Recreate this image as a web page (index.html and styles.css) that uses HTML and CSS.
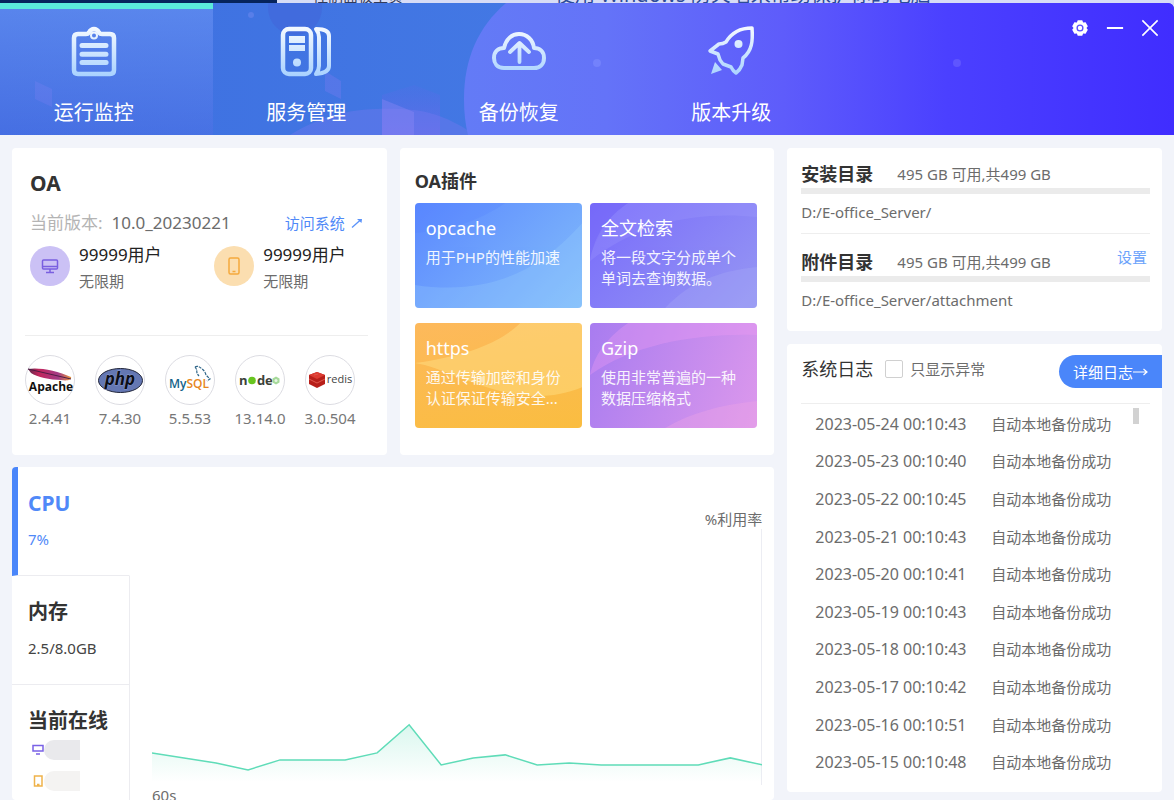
FILE: index.html
```html
<!DOCTYPE html>
<html lang="zh-CN">
<head>
<meta charset="utf-8">
<meta name="viewport" content="width=device-width, initial-scale=1">
<title>OA 运行监控</title>
<link rel="stylesheet" href="styles.css">
</head>
<body>
<div class="desktop">
  <span class="desktop-dark"></span>
  <span class="desktop-side">控制面板主页</span>
  <span class="desktop-title">使用 Windows 防火墙来帮助保护你的电脑</span>
</div>
<div class="app">
  <header class="header">
    <svg class="header-art" viewBox="0 0 1174 132" preserveAspectRatio="none" aria-hidden="true">
      <defs>
        <linearGradient id="sweep" gradientUnits="userSpaceOnUse" x1="464" y1="0" x2="1174" y2="0">
          <stop offset="0" stop-color="#637bf6"/><stop offset=".2" stop-color="#6473f8"/><stop offset=".45" stop-color="#5e5cfb"/><stop offset=".68" stop-color="#4b40ff"/><stop offset="1" stop-color="#402dff"/>
        </linearGradient>
        <linearGradient id="cube" x1="0" y1="0" x2="0" y2="1">
          <stop offset="0" stop-color="#6c62ec" stop-opacity=".1"/><stop offset="1" stop-color="#7568f0" stop-opacity=".5"/>
        </linearGradient>
      </defs>
      <circle cx="295" cy="5" r="27" fill="#4264d8" opacity=".55"/>
      <path d="M382 92L414 82L440 92V132H382Z" fill="url(#cube)"/>
      <path d="M290 132C330 108 360 105 400 106C430 107 450 115 475 132Z" fill="#7a78f0" opacity=".35"/>
      <path d="M382 96L414 109V132H382Z" fill="#8b86f4" opacity=".4"/>
      <path d="M35 78L52 86V104L35 96ZM325 68L341 78V96L325 88Z" fill="#7a7cf0" opacity=".35"/>
      <path d="M506 0C478 24 464 56 464 96Q464 116 468 132H1174V0Z" fill="url(#sweep)"/>
      <circle cx="597" cy="60" r="4" fill="#8190ff" opacity=".5"/>
      <circle cx="957" cy="60" r="4" fill="#736cff" opacity=".5"/>
      <circle cx="251" cy="12" r="3" fill="#7089f0" opacity=".5"/>
    </svg>
    <nav class="tabs">
      <button class="tab tab-active" type="button">
        <svg class="tab-icon" viewBox="0 0 56 56" fill="none" stroke="url(#ice)" aria-hidden="true">
          <defs><linearGradient id="ice" gradientUnits="userSpaceOnUse" x1="0" y1="4" x2="0" y2="52"><stop offset="0" stop-color="#f4f9ff"/><stop offset="1" stop-color="#a9d2ff"/></linearGradient></defs>
          <path d="M12 10H20Q22 10 23 8.500Q25 5 28 5T33 8.500Q34 10 36 10H44Q48 10 48 14V46Q48 50 44 50H12Q8 50 8 46V14Q8 10 12 10Z" stroke-width="4.500"/>
          <circle cx="28" cy="11.500" r="3" stroke-width="2"/>
          <path d="M16 21.500H40M16 30.200H40M16 38.500H40.100" stroke-width="5" stroke-linecap="round"/>
        </svg>
        <span>运行监控</span>
      </button>
      <button class="tab" type="button">
        <svg class="tab-icon" viewBox="0 0 56 56" fill="none" stroke="url(#ice)" aria-hidden="true">
          <rect x="5" y="5" width="28" height="45" rx="6" stroke-width="4.500"/>
          <path d="M11 12H27V19H11ZM11 21H27V27H11Z" fill="url(#ice)" stroke="none"/>
          <circle cx="19" cy="38.500" r="4" fill="url(#ice)" stroke="none"/>
          <path d="M38 5Q51 5 51 12V42Q51 49 38 50Q41 46 41 42V13Q41 9 38 5Z" stroke-width="4" stroke-linejoin="round"/>
        </svg>
        <span>服务管理</span>
      </button>
      <button class="tab" type="button">
        <svg class="tab-icon" viewBox="0 0 56 56" fill="none" stroke="url(#ice)" stroke-linecap="round" stroke-linejoin="round" aria-hidden="true">
          <path d="M13 44C6 44 3 39 3 34C3 28 7 24 13 24C15 15 21 10 28 10C36 10 42 16 43 24C49 24 53 28 53 34C53 40 49 44 43 44Z" stroke-width="4"/>
          <path d="M28.500 38V20M19 28L28.500 19L38 28" stroke-width="3.800"/>
        </svg>
        <span>备份恢复</span>
      </button>
      <button class="tab" type="button">
        <svg class="tab-icon" viewBox="0 0 56 56" fill="none" stroke="url(#ice)" stroke-linejoin="round" aria-hidden="true">
          <path d="M49 4C38 4 29 8 23 18Q20 20 16 20L7 27L15 30L17 36L20 40L28 43Q30 47 33 49Q37 46 39 41L40 34C49 27 50 17 49 4Z" stroke-width="3.500"/>
          <circle cx="35.500" cy="20" r="4" fill="url(#ice)" stroke="none"/>
          <path d="M12 38L19 46L8 50Z" fill="url(#ice)" stroke="none"/>
        </svg>
        <span>版本升级</span>
      </button>
    </nav>
    <div class="window-controls">
      <button type="button" aria-label="设置"><svg viewBox="0 0 20 20" aria-hidden="true"><path fill="#fff" d="M7.500 1.500H12.500L13.500 4L16.200 3.700L18.700 8L17.200 10L18.700 12L16.200 16.300L13.500 16L12.500 18.500H7.500L6.500 16L3.800 16.300L1.300 12L2.800 10L1.300 8L3.800 3.700L6.500 4Z"/><circle cx="10" cy="10" r="3.200" fill="none" stroke="#5a4dff" stroke-width="1.500"/></svg></button>
      <button type="button" aria-label="最小化"><svg viewBox="0 0 20 20" aria-hidden="true"><path d="M1 10H19" stroke="#fff" stroke-width="2.200"/></svg></button>
      <button type="button" aria-label="关闭"><svg viewBox="0 0 20 20" aria-hidden="true"><path d="M1.500 1.500L18.500 18.500M18.500 1.500L1.500 18.500" stroke="#fff" stroke-width="1.800"/></svg></button>
    </div>
  </header>

  <main class="main">
    <section class="card oa">
      <h2 class="title-lg">OA</h2>
      <div class="version">
        <span class="version-label">当前版本:</span><span>10.0_20230221</span>
        <a class="visit" href="#">访问系统 <svg viewBox="0 0 12 12" aria-hidden="true"><path d="M1 10.500L10 2.500" fill="none" stroke="#5b93fa" stroke-width="1.300"/><path d="M6 2H11L10.500 6Z" fill="#5b93fa"/></svg></a>
      </div>
      <div class="users">
        <div class="user">
          <span class="user-icon user-desktop"><svg viewBox="0 0 18 18" fill="none" stroke="#7a5fe0" stroke-width="1.500" aria-hidden="true"><rect x="1.500" y="3" width="15" height="9" rx="1"/><path d="M1.500 9.500H16.500M9 12V15.500M5 15.500H13"/></svg></span>
          <div><div class="user-count">99999用户</div><div class="user-term">无限期</div></div>
        </div>
        <div class="user">
          <span class="user-icon user-mobile"><svg viewBox="0 0 18 18" fill="none" stroke="#f5a93c" stroke-width="1.500" aria-hidden="true"><rect x="4" y="1" width="10" height="16" rx="1.500"/><path d="M7.500 14.500H10.500"/></svg></span>
          <div><div class="user-count">99999用户</div><div class="user-term">无限期</div></div>
        </div>
      </div>
      <ul class="stack">
        <li>
          <svg class="logo" viewBox="0 0 50 50" role="img" aria-label="Apache"><defs><linearGradient id="feather"><stop offset="0" stop-color="#5c2a4b"/><stop offset=".25" stop-color="#c2265c"/><stop offset=".7" stop-color="#a33a86"/><stop offset="1" stop-color="#e8973a"/></linearGradient></defs><circle cx="25" cy="25" r="24.500" class="logo-ring"/><path d="M3 14C12 12 32 15 46 22C47 25 42 26 36 25C25 25 12 22 6 18Z" fill="url(#feather)"/><path d="M3 14L46 24" stroke="#4e1d45" fill="none"/><text x="26" y="36" class="logo-text apache">Apache</text></svg>
          <span>2.4.41</span>
        </li>
        <li>
          <svg class="logo" viewBox="0 0 50 50" role="img" aria-label="php"><circle cx="25" cy="25" r="24.500" class="logo-ring"/><ellipse cx="25.500" cy="25.500" rx="22" ry="12" fill="#6477b3" stroke="#20253a" stroke-width="1"/><text x="25" y="30" class="logo-text php">php</text></svg>
          <span>7.4.30</span>
        </li>
        <li>
          <svg class="logo" viewBox="0 0 50 50" role="img" aria-label="MySQL"><circle cx="25" cy="25" r="24.500" class="logo-ring"/><path d="M30 12Q33 10 37 14Q40 16 41 20L45 24L42 26M30 12L32 15Q31 18 34 21" fill="none" stroke="#2d6487" stroke-width="1.200" stroke-dasharray="3 1"/><text x="24" y="33" class="logo-text mysql"><tspan fill="#14638a">My</tspan><tspan fill="#e68622">SQL</tspan></text></svg>
          <span>5.5.53</span>
        </li>
        <li>
          <svg class="logo" viewBox="0 0 50 50" role="img" aria-label="node"><circle cx="25" cy="25" r="24.500" class="logo-ring"/><text x="4" y="30" class="logo-text node">n</text><circle cx="17" cy="25.500" r="3.800" fill="#68c51f"/><text x="22" y="30" class="logo-text node">d</text><text x="30" y="30" class="logo-text node">e</text><path d="M41 21.500L44.500 23.500V27.500L41 29.500L37.500 27.500V23.500Z" fill="#a6d99a"/><circle cx="41" cy="25.500" r="1.500" fill="#e8f6e4"/></svg>
          <span>13.14.0</span>
        </li>
        <li>
          <svg class="logo" viewBox="0 0 50 50" role="img" aria-label="redis"><circle cx="25" cy="25" r="24.500" class="logo-ring"/><path d="M4 20L12 17L20 20V29L12 33L4 29Z" fill="#b71f1a"/><path d="M4 20L12 17L20 20L12 24Z" fill="#dd3b31"/><path d="M4 24L12 28L20 24M9 20L13 19" stroke="#e0574d" fill="none"/><text x="34.500" y="28" class="logo-text redis">redis</text></svg>
          <span>3.0.504</span>
        </li>
      </ul>
    </section>

    <section class="card plugins">
      <h2 class="title">OA插件</h2>
      <div class="tiles">
        <article class="tile tile-blue"><svg viewBox="0 0 167 105" preserveAspectRatio="none" aria-hidden="true"><path d="M0 82C80 94 130 62 167 20V105H0Z" fill="#a5dcff" opacity=".22"/><path d="M0 30C50 26 75 10 90 0H0Z" fill="#4f7bff" opacity=".2"/></svg><h3>opcache</h3><p>用于PHP的性能加速</p></article>
        <article class="tile tile-violet"><svg viewBox="0 0 167 105" preserveAspectRatio="none" aria-hidden="true"><path d="M0 54C12 20 25 8 38 0H0Z" fill="#6d60f4" opacity=".2"/><path d="M0 58C50 18 110 8 167 14V0H38C15 16 4 34 0 58Z" fill="#a9a4ff" opacity=".22"/><path d="M75 105C100 78 130 68 167 64V105Z" fill="#b0b2f8" opacity=".25"/></svg><h3>全文检索</h3><p>将一段文字分成单个单词去查询数据。</p></article>
        <article class="tile tile-amber"><svg viewBox="0 0 167 105" preserveAspectRatio="none" aria-hidden="true"><path d="M0 40C50 33 85 20 105 0H167V64C100 92 40 46 0 40Z" fill="#ffe58c" opacity=".42"/></svg><h3>https</h3><p>通过传输加密和身份认证保证传输安全...</p></article>
        <article class="tile tile-pink"><svg viewBox="0 0 167 105" preserveAspectRatio="none" aria-hidden="true"><path d="M0 52C45 20 110 10 167 12V0H38C15 16 4 34 0 52Z" fill="#ee9cf4" opacity=".35"/><path d="M75 105C100 90 130 82 167 78V105Z" fill="#f0a6e4" opacity=".35"/></svg><h3>Gzip</h3><p>使用非常普遍的一种数据压缩格式</p></article>
      </div>
    </section>

    <section class="card monitor">
      <nav class="metrics">
        <button class="metric metric-active" type="button"><strong>CPU</strong><span>7%</span></button>
        <button class="metric" type="button"><strong>内存</strong><span>2.5/8.0GB</span></button>
        <button class="metric" type="button"><strong>当前在线</strong>
          <span class="online"><svg viewBox="0 0 12 12" fill="none" stroke="#7a62e6" stroke-width="1.500" aria-hidden="true"><path d="M1 1.500H11V7H1ZM4 10H8"/></svg><i class="mask"></i></span>
          <span class="online"><svg viewBox="0 0 12 12" fill="none" stroke="#efb24a" stroke-width="1.500" aria-hidden="true"><path d="M2.500 1H10V11H2.500ZM5 9.500H7.500"/></svg><i class="mask mask-light"></i></span>
        </button>
      </nav>
      <div class="chart">
        <div class="chart-unit">%利用率</div>
        <svg class="chart-plot" viewBox="0 0 610 255" preserveAspectRatio="none" role="img" aria-label="CPU 利用率">
          <defs><linearGradient id="area" gradientUnits="userSpaceOnUse" x1="0" y1="190" x2="0" y2="252"><stop offset="0" stop-color="#5fdcb8" stop-opacity=".25"/><stop offset="1" stop-color="#5fdcb8" stop-opacity="0"/></linearGradient></defs>
          <path d="M0 223L32 228L64 233L96 240L128 230H193L225 223L257 195L289 235L321 228L353 225L385 235L417 233L449 235H546L578 228L610 235V255H0Z" fill="url(#area)"/>
          <path d="M609.500 0V255" stroke="#e3e5ee"/>
          <path d="M0 223L32 228L64 233L96 240L128 230H193L225 223L257 195L289 235L321 228L353 225L385 235L417 233L449 235H546L578 228L610 235" fill="none" stroke="#5fdcb8" stroke-width="1.500"/>
        </svg>
        <div class="chart-start">60s</div>
      </div>
    </section>

    <aside class="side">
      <section class="card dirs">
        <div class="dir">
          <div class="dir-head"><h2 class="title">安装目录</h2><span>495 GB 可用,共499 GB</span></div>
          <div class="bar"></div>
          <div class="path">D:/E-office_Server/</div>
        </div>
        <div class="dir">
          <div class="dir-head"><h2 class="title">附件目录</h2><span>495 GB 可用,共499 GB</span><a class="dir-set" href="#">设置</a></div>
          <div class="bar"></div>
          <div class="path">D:/E-office_Server/attachment</div>
        </div>
      </section>
      <section class="card logs">
        <div class="logs-head">
          <h2 class="logs-title">系统日志</h2>
          <label class="only"><input type="checkbox">只显示异常</label>
          <button class="detail" type="button">详细日志<svg viewBox="0 0 15 10" aria-hidden="true"><path d="M0 5H14M10.500 2L14 5L10.500 8" fill="none" stroke="#fff" stroke-width="1.200"/></svg></button>
        </div>
        <div class="logs-body">
          <table class="log-table">
            <tbody>
              <tr><td>2023-05-24 00:10:43</td><td>自动本地备份成功</td></tr>
              <tr><td>2023-05-23 00:10:40</td><td>自动本地备份成功</td></tr>
              <tr><td>2023-05-22 00:10:45</td><td>自动本地备份成功</td></tr>
              <tr><td>2023-05-21 00:10:43</td><td>自动本地备份成功</td></tr>
              <tr><td>2023-05-20 00:10:41</td><td>自动本地备份成功</td></tr>
              <tr><td>2023-05-19 00:10:43</td><td>自动本地备份成功</td></tr>
              <tr><td>2023-05-18 00:10:43</td><td>自动本地备份成功</td></tr>
              <tr><td>2023-05-17 00:10:42</td><td>自动本地备份成功</td></tr>
              <tr><td>2023-05-16 00:10:51</td><td>自动本地备份成功</td></tr>
              <tr><td>2023-05-15 00:10:48</td><td>自动本地备份成功</td></tr>
            </tbody>
          </table>
          <span class="thumb"></span>
        </div>
      </section>
    </aside>
  </main>
</div>
</body>
</html>
```

FILE: styles.css
```css
* { box-sizing: border-box; }

body {
  margin: 0;
  height: 100vh;
  display: flex;
  flex-direction: column;
  overflow: hidden;
  background: #d7dcf6;
  color: #6c6c6c;
  font: 15px/24px "Noto Sans", "Noto Sans CJK SC", sans-serif;
}

h2, h3, p, ul { margin: 0; padding: 0; }
button { border: 0; padding: 0; background: none; color: inherit; font: inherit; cursor: pointer; }
a { color: #5089f8; text-decoration: none; }

/* Strip of the window behind */
.desktop {
  flex: none;
  height: 3px;
  display: flex;
  align-items: flex-end;
  overflow: hidden;
  color: #2d4b96;
  white-space: nowrap;
}
.desktop-dark { width: 277px; height: 3px; background: #06245c; }
.desktop-side { margin-left: 36px; line-height: 14px; color: #333c5a; }
.desktop-title { margin-left: 152px; font-size: 20px; line-height: 16px; }

.app {
  flex: 1;
  min-height: 0;
  display: flex;
  flex-direction: column;
  background: #f2f4fa;
  border-radius: 0 6px 0 0;
  overflow: hidden;
}

/* Header */
.header {
  flex: none;
  position: relative;
  display: flex;
  justify-content: space-between;
  height: 132px;
  background: linear-gradient(90deg, #3d6fe0, #4378e4 45%, #402dff);
}
.header-art { position: absolute; inset: 0; width: 100%; height: 100%; }
.tabs { position: relative; display: grid; grid-template-columns: repeat(4, 1fr); width: 73%; max-width: 850px; }
.tab {
  display: flex;
  flex-direction: column;
  align-items: center;
  gap: 18px;
  padding: 21px 25px 0 0;
  color: #fff;
  font-size: 20px;
  line-height: 30px;
  white-space: nowrap;
}
.tab-active {
  padding-top: 15px;
  border-top: 6px solid #5beadb;
  background: linear-gradient(180deg, rgba(116, 154, 248, .5), rgba(90, 110, 232, .3));
}
.tab-icon { width: 56px; height: 56px; flex: none; }
.window-controls { position: relative; display: flex; gap: 17px; padding: 16px 15px 0 0; align-items: flex-start; }
.window-controls button { width: 18px; height: 18px; }
.window-controls svg { display: block; width: 18px; height: 18px; }

/* Dashboard grid */
.main {
  flex: 1;
  min-height: 0;
  display: grid;
  grid-template-columns: repeat(3, minmax(0, 1fr));
  grid-template-rows: auto 1fr;
  column-gap: 13px;
  row-gap: 12px;
  padding: 13px 12px 0;
}
.card { background: #fff; border-radius: 4px; }
.title { color: #333; font-size: 18px; font-weight: 700; }
.title-lg { margin-left: 5px; color: #333; font-size: 21px; line-height: 26px; font-weight: 700; }

/* OA summary */
.oa { padding: 22px 19px 24px 13px; }
.version { display: flex; gap: 9px; margin: 15px 5px 7px; font-size: 17px; white-space: nowrap; }
.version-label { color: #b4b4b4; }
.visit { display: flex; align-items: center; gap: 6px; margin-left: auto; font-size: 15px; }
.visit svg { width: 12px; height: 12px; }
.users { display: grid; grid-template-columns: 6fr 5fr; padding: 0 0 41px 5px; line-height: 26px; white-space: nowrap; }
.user { display: flex; gap: 9px; }
.user-icon { display: flex; align-items: center; justify-content: center; width: 40px; height: 40px; margin-top: 4px; border-radius: 50%; }
.user-icon svg { width: 18px; height: 18px; }
.user-desktop { background: #cbc1f5; }
.user-mobile { background: #fbdeb0; }
.user-count { color: #222; font-size: 17px; }
.stack { display: flex; gap: 20px; padding-top: 19px; border-top: 1px solid #eee; list-style: none; }
.stack li { display: flex; flex-direction: column; align-items: center; width: 50px; line-height: 26px; white-space: nowrap; color: #777; }
.logo { width: 50px; height: 50px; }
.logo-ring { fill: #fff; stroke: #dcdce2; }
.logo-text { font-family: "Open Sans", sans-serif; text-anchor: middle; }
.apache { font-size: 12px; font-weight: 700; fill: #111; }
.php { font-size: 17px; font-weight: 700; font-style: italic; fill: #0c0e18; stroke: #8b9bd0; stroke-width: 1px; paint-order: stroke; }
.mysql { font-size: 12px; font-weight: 600; }
.node { font-size: 13px; font-weight: 700; fill: #3c4238; text-anchor: start; }
.redis { font-size: 11px; fill: #444; }

/* Plugins */
.plugins { padding: 20px 17px 24px 15px; }
.plugins .title { line-height: 26px; margin-bottom: 9px; }
.tiles { display: grid; grid-template-columns: 1fr 1fr; gap: 15px 8px; }
.tile { position: relative; height: 105px; padding: 13px 11px; border-radius: 4px; overflow: hidden; color: #fff; }
.tile svg { position: absolute; inset: 0; width: 100%; height: 100%; }
.tile h3 { position: relative; margin-bottom: 7px; font-size: 18px; line-height: 24px; font-weight: 400; }
.tile p { position: relative; width: 140px; line-height: 21px; opacity: .9; }
.tile-blue { background: linear-gradient(135deg, #5b89ff, #83bdfa); }
.tile-violet { background: linear-gradient(135deg, #786bfb, #9697f3); }
.tile-amber { background: linear-gradient(170deg, #fdb95c, #fabd40); }
.tile-pink { background: linear-gradient(110deg, #a87cf0, #dc98ec); }

/* Resource monitor */
.monitor { grid-column: 1 / 3; grid-row: 2; display: flex; min-height: 0; overflow: hidden; }
.metrics { flex: none; width: 118px; display: flex; flex-direction: column; }
.metric {
  flex: none;
  display: flex;
  flex-direction: column;
  align-items: flex-start;
  min-height: 109px;
  padding: 23px 0 0 16px;
  border-right: 1px solid #ececf0;
  border-bottom: 1px solid #ececf0;
  color: #444;
  text-align: left;
}
.metric strong { margin-bottom: 11px; color: #333; font-size: 20px; line-height: 26px; }
.metric-active { padding-left: 10px; border-left: 6px solid #4a86fa; border-right-color: transparent; color: #5089f8; }
.metric-active strong { color: #5089f8; font-size: 21px; }
.metric:last-child { flex: 1; border-bottom: 0; }
.metric:last-child strong { margin-bottom: 6px; }
.online { display: flex; align-items: center; height: 20px; margin: 0 0 11px 4px; }
.online svg { width: 12px; height: 12px; }
.mask { width: 36px; height: 20px; background: #e9e9ec; border-radius: 10px 0 0 10px; }
.mask-light { background: #f4f3f2; }
.chart { flex: 1; min-width: 0; display: flex; flex-direction: column; padding: 42px 12px 0 22px; line-height: 20px; }
.chart-unit { text-align: right; }
.chart-plot { flex: none; width: 100%; height: 256px; }

/* Right column */
.side { grid-column: 3; grid-row: 1 / 3; display: flex; flex-direction: column; gap: 13px; min-height: 0; margin-bottom: 8px; }
.dirs { padding: 14px 12px 19px 14px; white-space: nowrap; }
.dir + .dir { margin-top: 9px; padding-top: 16px; border-top: 1px solid #eee; }
.dir-head { display: flex; gap: 24px; }
.dir-set { margin-left: auto; padding-right: 3px; line-height: 14px; color: #6ca3fb; }
.bar { height: 6px; margin: 2px 0 6px; background: #ebebeb; }
.logs { flex: 1; min-height: 0; display: flex; flex-direction: column; padding: 11px 0 10px; }
.logs-head { display: flex; align-items: flex-start; padding-left: 14px; line-height: 28px; white-space: nowrap; }
.logs-title { color: #333; font-size: 18px; line-height: 28px; font-weight: 400; }
.only { display: flex; align-items: center; gap: 7px; margin-left: 12px; }
.only input { appearance: none; width: 18px; height: 18px; margin: 0; border: 1px solid #d0d0d0; border-radius: 2px; background: #fff; }
.detail { display: flex; align-items: center; height: 33px; margin-left: auto; padding: 0 14px; border-radius: 17px 0 0 17px; background: #4a86fa; color: #fff; }
.detail svg { width: 15px; height: 10px; }
.logs-body { flex: 1; min-height: 0; display: flex; justify-content: space-between; align-items: flex-start; margin: 15px 12px 0 14px; padding-top: 2px; border-top: 1px solid #eee; }
.log-table { height: 100%; margin-left: 14px; border-collapse: collapse; white-space: nowrap; line-height: 22px; }
.log-table td { padding: 0 0 2px; }
.log-table td:first-child { width: 176px; font-size: 16px; }
.thumb { width: 6px; height: 16px; margin: 2px 11px 0 0; background: #d2d2d2; }
```
